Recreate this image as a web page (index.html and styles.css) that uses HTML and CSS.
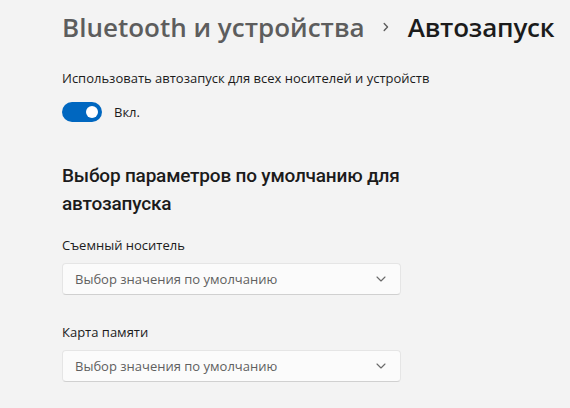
FILE: index.html
```html
<!DOCTYPE html>
<html lang="ru">
<head>
<meta charset="utf-8">
<link rel="stylesheet" href="styles.css">
</head>
<body>
<main class="page">
  <header class="crumbs">
    <span class="crumb-parent">Bluetooth и устройства</span>
    <svg class="crumb-sep" width="6" height="12" viewBox="0 0 6 12"><path d="M1.2 2.5 L4.5 6 L1.2 9.5" fill="none" stroke="#5d5d5d" stroke-width="1.4" stroke-linecap="round" stroke-linejoin="round"/></svg>
    <span class="crumb-current">Автозапуск</span>
  </header>

  <section class="setting">
    <p class="setting-label">Использовать автозапуск для всех носителей и устройств</p>
    <div class="toggle-row">
      <span class="toggle"><span class="knob"></span></span>
      <span class="toggle-text">Вкл.</span>
    </div>
  </section>

  <h2 class="section-title">Выбор параметров по умолчанию для автозапуска</h2>

  <div class="field">
    <label class="field-label">Съемный носитель</label>
    <div class="select">
      <span class="select-text">Выбор значения по умолчанию</span>
      <svg class="select-chev" width="10" height="6" viewBox="0 0 10 6"><path d="M1 1 L5 5 L9 1" fill="none" stroke="#6a6a6a" stroke-width="1.1" stroke-linecap="round" stroke-linejoin="round"/></svg>
    </div>
  </div>

  <div class="field">
    <label class="field-label">Карта памяти</label>
    <div class="select">
      <span class="select-text">Выбор значения по умолчанию</span>
      <svg class="select-chev" width="10" height="6" viewBox="0 0 10 6"><path d="M1 1 L5 5 L9 1" fill="none" stroke="#6a6a6a" stroke-width="1.1" stroke-linecap="round" stroke-linejoin="round"/></svg>
    </div>
  </div>
</main>
</body>
</html>
```

FILE: styles.css
```css
html, body {
  margin: 0;
  padding: 0;
  background: #f3f3f3;
  font-family: "Open Sans", "Noto Sans", sans-serif;
  color: #1b1b1b;
}

.page {
  padding: 8px 0 0 62px;
  width: 508px;
  overflow: hidden;
}

.crumbs {
  display: flex;
  align-items: center;
  white-space: nowrap;
  height: 38px;
}

.crumb-parent {
  font-size: 26px;
  font-weight: 600;
  color: #5d5d5d;
}

.crumb-sep {
  margin: 0 19px 0 18px;
}

.crumb-current {
  font-size: 26px;
  font-weight: 600;
  color: #1b1b1b;
  letter-spacing: -0.2px;
}

.setting {
  margin-top: 22px;
}

.setting-label {
  margin: 0;
  font-size: 13px;
  line-height: 20px;
}

.toggle-row {
  display: flex;
  align-items: center;
  margin-top: 14px;
  height: 20px;
}

.toggle {
  width: 40px;
  height: 20px;
  border-radius: 10px;
  background: #0067c0;
  display: flex;
  align-items: center;
  justify-content: flex-end;
  padding-right: 4px;
  box-sizing: border-box;
}

.knob {
  width: 12px;
  height: 12px;
  border-radius: 50%;
  background: #ffffff;
}

.toggle-text {
  margin-left: 12px;
  font-size: 13px;
}

.section-title {
  margin: 40px 0 0 0;
  font-family: Roboto, "Open Sans", sans-serif;
  font-size: 19px;
  font-weight: 500;
  letter-spacing: -0.2px;
  line-height: 28px;
  width: 420px;
}

.field {
  margin-top: 17px;
}

.field + .field {
  margin-top: 27px;
}

.field-label {
  display: block;
  font-size: 13px;
  line-height: 20px;
}

.select {
  margin-top: 8px;
  width: 339px;
  height: 32px;
  box-sizing: border-box;
  background: #fbfbfb;
  border: 1px solid #e5e5e5;
  border-bottom-color: #d0d0d0;
  border-radius: 4px;
  display: flex;
  align-items: center;
  justify-content: space-between;
  padding: 0 14px 0 12px;
}

.select-text {
  font-size: 13px;
  color: #5f5f5f;
}
```
